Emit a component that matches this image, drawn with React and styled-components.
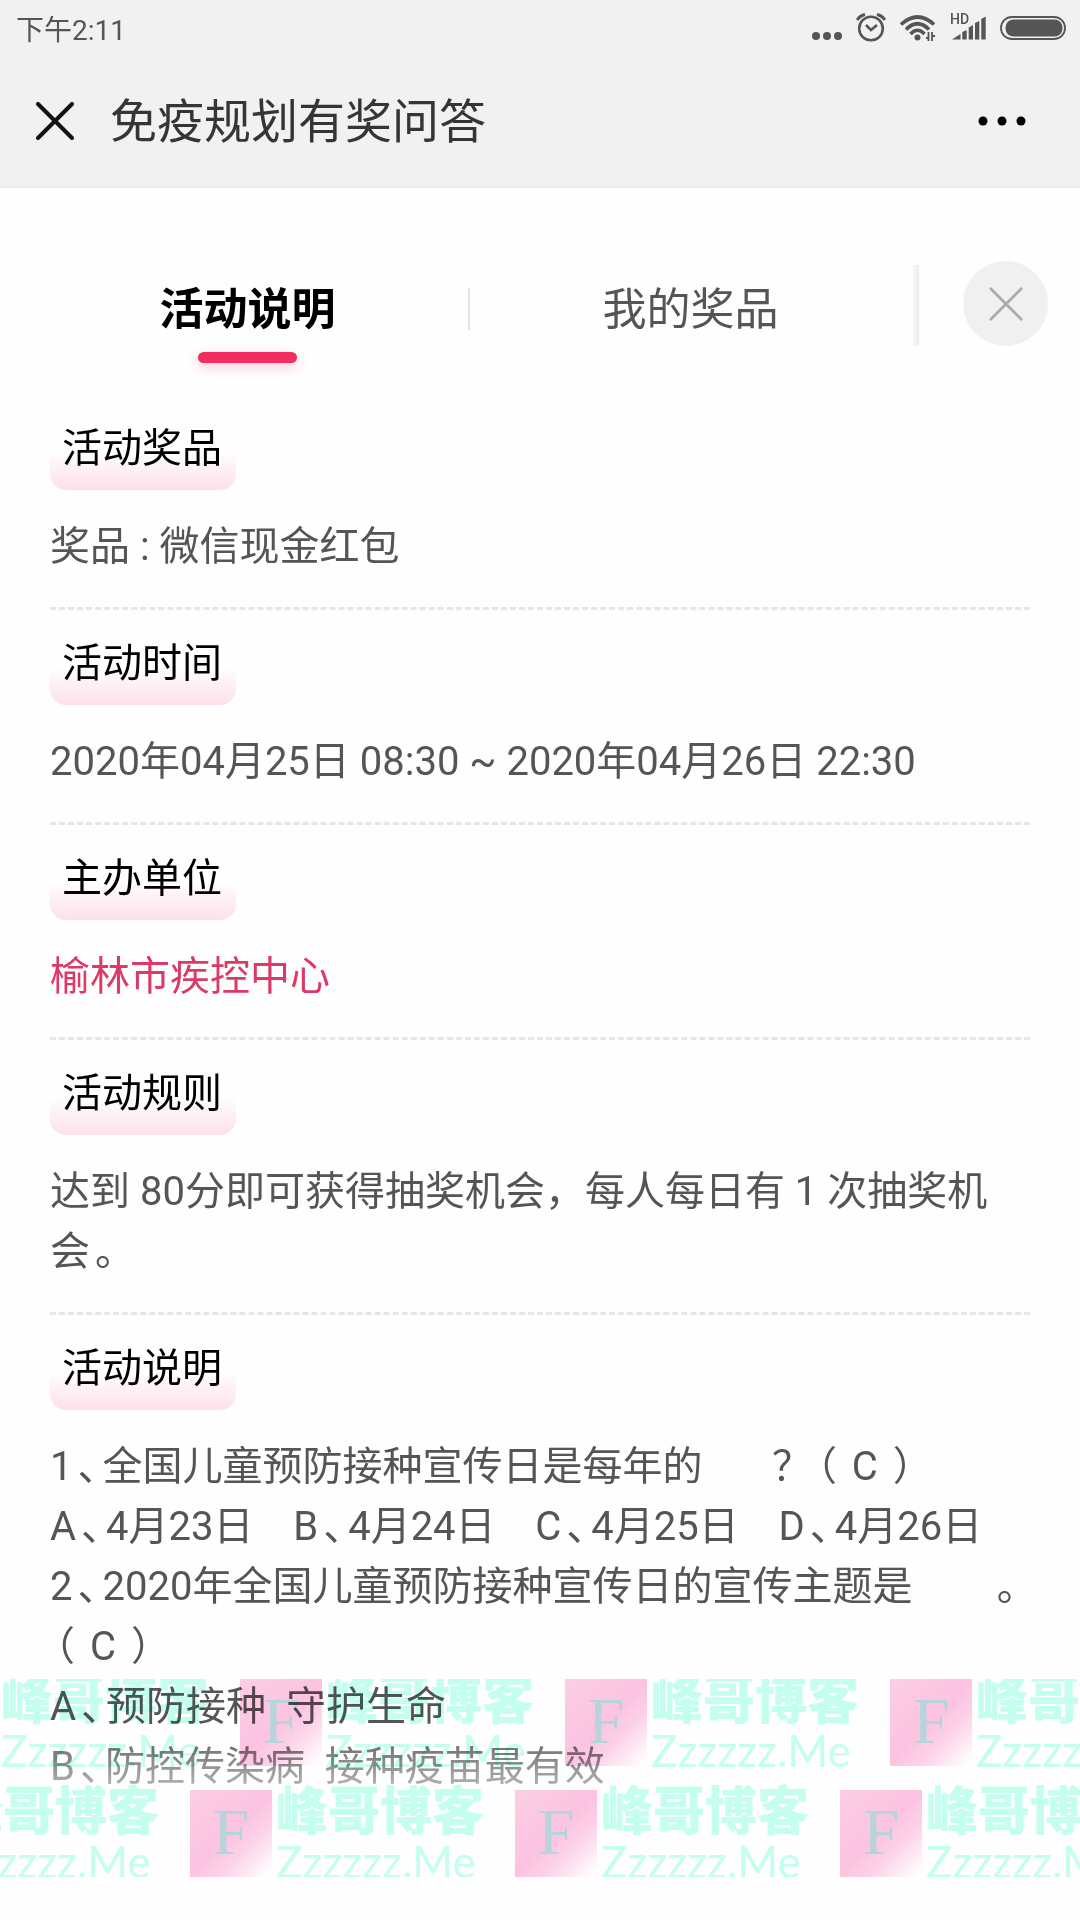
import React from 'react'
import styled, { createGlobalStyle } from 'styled-components'

const GlobalStyle = createGlobalStyle`
  * {
    box-sizing: border-box;
  }
  body {
    margin: 0;
    background: #fefefe;
    color: #555;
    font-family: Roboto, "Noto Sans CJK SC", sans-serif;
  }
  button {
    padding: 0;
    border: 0;
    background: none;
    font-family: inherit;
    cursor: pointer;
  }
  h1, h2, p {
    margin: 0;
    font-weight: 400;
  }
`
const Page = styled.div`
  position: relative;
  min-height: 100vh;
  overflow: hidden;
`
const Top = styled.header`
  background: #f1f1f1;
  border-bottom: 2px solid #ebebeb;
`
const StatusBar = styled.div`
  display: flex;
  justify-content: space-between;
  align-items: center;
  height: 56px;
  padding: 0 14px 0 16px;
  font-size: 28px;
  color: #555;
`
const StatusIcons = styled.div`
  display: flex;
  align-items: center;
  gap: 14px;
`
const NavBar = styled.div`
  display: flex;
  align-items: center;
  height: 130px;
  padding: 0 53px 0 36px;
`
const Title = styled.h1`
  flex: 1;
  margin-left: 36px;
  padding-top: 2px;
  font-size: 47px;
  line-height: 60px;
  color: #353535;
`
const IconButton = styled.button`
  display: flex;
`
const TabBar = styled.nav`
  display: flex;
  align-items: flex-start;
  padding: 73px 32px 32px 27px;
`
const Tab = styled.button`
  flex: 1;
  display: flex;
  flex-direction: column;
  align-items: center;
  padding-top: 19px;
  font-size: 44px;
  line-height: 60px;
  font-weight: ${(props) => (props.$active ? 700 : 400)};
  color: ${(props) => (props.$active ? '#000' : '#555')};

  &::after {
    content: '';
    width: 99px;
    height: 11px;
    margin-top: 12px;
    border-radius: 6px;
    background: ${(props) => (props.$active ? '#f22e60' : 'transparent')};
    box-shadow: ${(props) => (props.$active ? '0 4px 12px rgba(242, 46, 96, 0.25)' : 'none')};
  }
`
const TabLine = styled.span`
  width: 2px;
  height: 42px;
  margin-top: 27px;
  background: #e4e4e4;
`
const EdgeLine = styled.span`
  width: 8px;
  height: 81px;
  margin: 4px 44px 0 0;
  background: linear-gradient(to right, rgba(0, 0, 0, 0), rgba(0, 0, 0, 0.08));
`
const CloseRound = styled.button`
  display: flex;
  align-items: center;
  justify-content: center;
  width: 85px;
  height: 85px;
  border-radius: 50%;
  background: #f0f0f0;
`
/* the list fades out towards its lower edge */
const Content = styled.main`
  padding: 0 50px;
  mask-image: linear-gradient(to top, rgba(0, 0, 0, 0.35), #000 70px);
`
const Section = styled.section`
  padding: 29px 0 30px;
  border-bottom: 3px dashed #e6e6e6;

  &:last-child {
    padding-bottom: 0;
    border-bottom: 0;
  }
`
const Label = styled.h2`
  width: 186px;
  margin-bottom: 27px;
  padding: 0 12px 16px;
  border-radius: 16px;
  font-size: 40px;
  line-height: 50px;
  color: #000;
  background: linear-gradient(to bottom, rgba(253, 224, 233, 0), #fde0e9) bottom / 100% 38px no-repeat;
`
const Text = styled.p`
  font-size: 40px;
  line-height: 60px;
  white-space: pre-wrap;
`
const OrgLink = styled.a`
  color: #dc3868;
  text-decoration: none;
`
const Mark = styled.span`
  padding: 0 5px;
  font-feature-settings: 'halt';
`
const Watermark = styled.div`
  position: absolute;
  left: 0;
  right: 0;
  bottom: 43px;
  display: flex;
  flex-direction: column;
  gap: 24px;
  overflow: hidden;
  pointer-events: none;
  mix-blend-mode: multiply;
`
const WatermarkRow = styled.div`
  display: flex;
  margin-left: ${(props) => props.$start}px;
`
const Stamp = styled.div`
  flex: none;
  display: flex;
  gap: 4px;
  width: 325px;
  height: 87px;
`
const StampLogo = styled.div`
  width: 82px;
  text-align: center;
  font-family: "Liberation Serif", serif;
  font-size: 66px;
  line-height: 84px;
  color: #b7d5dc;
  background: linear-gradient(135deg, #fccfe4 0%, #fdc4e2 50%, #fdd3e9 68%, #fff 96%);
`
const StampText = styled.div`
  display: flex;
  flex-direction: column;
  white-space: nowrap;
  color: #c4fff0;
`
const StampName = styled.span`
  font-size: 52px;
  line-height: 46px;
  font-weight: 900;
`
const StampSite = styled.span`
  font-family: Lato, sans-serif;
  font-size: 44px;
  line-height: 50px;
`

const Cross = ({ size, color, width }) => (
  <svg width={size} height={size} viewBox="0 0 38 38" fill="none" stroke={color} strokeWidth={width} strokeLinecap="round">
    <path d="M2 2 36 36M36 2 2 36" />
  </svg>
)

const DotsIcon = () => (
  <svg width="30" height="26" viewBox="0 0 30 26" fill="#555">
    <circle cx="4" cy="21" r="4" />
    <circle cx="15" cy="21" r="4" />
    <circle cx="26" cy="21" r="4" />
  </svg>
)

const AlarmIcon = () => (
  <svg width="30" height="30" viewBox="0 0 30 30" fill="none" stroke="#555" strokeWidth="2.6">
    <circle cx="15" cy="15.5" r="11.8" />
    <path d="M10 12 15 17 21 12" />
    <path d="M1.2 7Q4 2.500 9 1.500M28.800 7Q26 2.500 21 1.500" strokeWidth="3" />
  </svg>
)

const WifiIcon = () => (
  <svg width="36" height="28" viewBox="0 0 36 28" fill="none" stroke="#555" strokeWidth="3.6">
    <path d="M1 10.500Q17.500-4.500 34 10.500" />
    <path d="M6 15.500Q17.500 4 29 15.500" />
    <path d="M10.500 20Q17.500 12.500 24.500 20" />
    <circle cx="17.500" cy="23.500" r="3" fill="#555" stroke="none" />
    <path d="M28.500 18V27M32 18V27" strokeWidth="1.800" />
    <path d="M28.500 24H26M32 22H35" strokeWidth="1.800" />
  </svg>
)

const SignalIcon = () => (
  <svg width="36" height="30" viewBox="0 0 36 30" fill="#555">
    <text x="0" y="11" fontSize="14" fontWeight="500" fontFamily="Roboto">HD</text>
    <path d="M2 26.500 10.500 21V26.500ZM12.300 19 16.700 17V26.500H12.300ZM18.700 14.500 23 12V26.500H18.700ZM25 10 29.300 8V26.500H25ZM31.300 6 35.700 3.500V26.500H31.300Z" />
  </svg>
)

const BatteryIcon = () => (
  <svg width="66" height="24" viewBox="0 0 66 24">
    <rect x="1" y="1" width="64" height="22" rx="11" fill="none" stroke="#555" strokeWidth="1.800" />
    <rect x="5.500" y="3.500" width="57" height="17" rx="8" fill="#555" />
  </svg>
)

const options = ['A|4月23日    ', 'B|4月24日    ', 'C|4月25日    ', 'D|4月26日']

const stamps = [0, 1, 2, 3]

const Stamps = ({ start }) => (
  <WatermarkRow $start={start}>
    {stamps.map((n) => (
      <Stamp key={n}>
        <StampLogo>F</StampLogo>
        <StampText>
          <StampName>峰哥博客</StampName>
          <StampSite>Zzzzzz.Me</StampSite>
        </StampText>
      </Stamp>
    ))}
  </WatermarkRow>
)

const App = () => {
  return (
    <>
      <GlobalStyle />
      <Page>
        <Top>
          <StatusBar>
            <span>下午2:11</span>
            <StatusIcons>
              <DotsIcon />
              <AlarmIcon />
              <WifiIcon />
              <SignalIcon />
              <BatteryIcon />
            </StatusIcons>
          </StatusBar>
          <NavBar>
            <IconButton aria-label="关闭">
              <Cross size={38} color="#111" width={4} />
            </IconButton>
            <Title>免疫规划有奖问答</Title>
            <IconButton aria-label="更多">
              <svg width="50" height="10" viewBox="0 0 50 10">
                <circle cx="6" cy="5" r="4.500" />
                <circle cx="25" cy="5" r="4.500" />
                <circle cx="44" cy="5" r="4.500" />
              </svg>
            </IconButton>
          </NavBar>
        </Top>
        <TabBar>
          <Tab $active>活动说明</Tab>
          <TabLine />
          <Tab>我的奖品</Tab>
          <EdgeLine />
          <CloseRound aria-label="收起">
            <Cross size={34} color="#aaa" width={3} />
          </CloseRound>
        </TabBar>
        <Content>
          <Section>
            <Label>活动奖品</Label>
            <Text>奖品 : 微信现金红包</Text>
          </Section>
          <Section>
            <Label>活动时间</Label>
            <Text>2020年04月25日 08:30 ~ 2020年04月26日 22:30</Text>
          </Section>
          <Section>
            <Label>主办单位</Label>
            <Text><OrgLink href="#">榆林市疾控中心</OrgLink></Text>
          </Section>
          <Section>
            <Label>活动规则</Label>
            <Text>达到 80分即可获得抽奖机会，每人每日有 1 次抽奖机会<Mark>。</Mark></Text>
          </Section>
          <Section>
            <Label>活动说明</Label>
            <Text>1<Mark>、</Mark>全国儿童预防接种宣传日是每年的{'       '}？<Mark>（</Mark> C <Mark>）</Mark></Text>
            <Text>
              {options.map((option) => {
                const [letter, day] = option.split('|')
                return <React.Fragment key={letter}>{letter}<Mark>、</Mark>{day}</React.Fragment>
              })}
            </Text>
            <Text>2<Mark>、</Mark>2020年全国儿童预防接种宣传日的宣传主题是{'        '}<Mark>。</Mark></Text>
            <Text><Mark>（</Mark> C <Mark>）</Mark></Text>
            <Text>A<Mark>、</Mark>预防接种{'  '}守护生命</Text>
            <Text>B<Mark>、</Mark>防控传染病{'  '}接种疫苗最有效</Text>
          </Section>
        </Content>
        <Watermark aria-hidden="true">
          <Stamps start={-85} />
          <Stamps start={-135} />
        </Watermark>
      </Page>
    </>
  )
}

export default App
